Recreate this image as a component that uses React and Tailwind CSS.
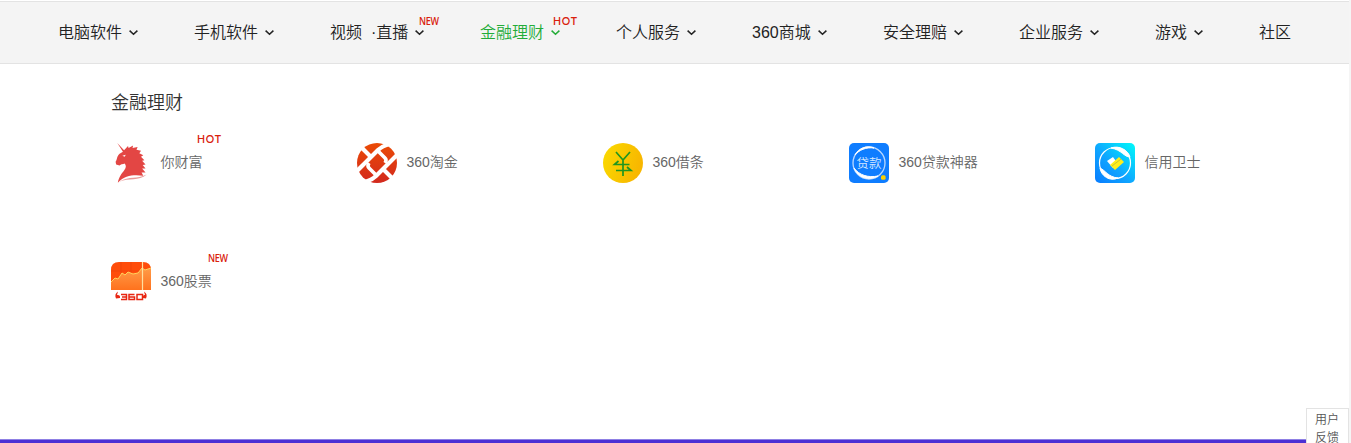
import React from 'react';

const NAV = [
  { label: '电脑软件', width: 'w-[136px]' },
  { label: '手机软件', width: 'w-[136px]' },
  { label: '视频', second: '·直播', badge: 'NEW', width: 'w-[150px]' },
  { label: '金融理财', badge: 'HOT', active: true, width: 'w-[136px]' },
  { label: '个人服务', width: 'w-[136px]' },
  { label: '360商城', width: 'w-[131px]' },
  { label: '安全理赔', width: 'w-[136px]' },
  { label: '企业服务', width: 'w-[136px]' },
  { label: '游戏', width: 'w-[104px]' },
  { label: '社区', leaf: true, width: 'w-[32px]' },
];

function Badge({ kind, className }) {
  return (
    <span
      className={`absolute text-[#d9210c] leading-[12px] ${
        kind === 'HOT'
          ? "font-['Lato','Liberation_Sans',sans-serif] font-semibold text-[10.5px] tracking-[0.8px]"
          : "origin-left scale-x-[.82] font-['Open_Sans','Liberation_Sans',sans-serif] font-semibold text-[11px] tracking-[-0.3px]"
      } ${className}`}
    >
      {kind}
    </span>
  );
}

function Chevron() {
  return (
    <svg className="ml-[7px] h-[6px] w-[9px] shrink-0" viewBox="0 0 9 6" fill="none" stroke="currentColor" strokeWidth="1.5">
      <path d="M.6 .6 4.5 4.2 8.4 .6" />
    </svg>
  );
}

function NavItem({ item }) {
  return (
    <a className={`relative flex shrink-0 items-center whitespace-nowrap ${item.width} ${item.active ? 'text-[#23ac38]' : 'text-[#222]'}`}>
      <span>{item.label}</span>
      {item.second && <span className="ml-[9px]">{item.second}</span>}
      {!item.leaf && <Chevron />}
      {item.badge === 'NEW' && <Badge kind="NEW" className="left-[89px] top-[-2px]" />}
      {item.badge === 'HOT' && <Badge kind="HOT" className="left-[73px] top-[-2px]" />}
    </a>
  );
}

function Unicorn() {
  return (
    <svg className="size-10 shrink-0" viewBox="0 0 40 40">
      <g transform="translate(-.5 0) scale(1.13 1.02)">
        <path fill="#e34644" d="M6 0 12 7 15.500 3 16 5 20 2.500 19.500 5 24 4 23 6.500 27 7.500 25.500 10 29 12 27 13.500 30 17 28 17.500 31 21 28.500 21.500 31 25 28 25 31 29 27.500 29 29 32C21 31 13 31 6.500 39 7.500 33 10 30 12 27 14 24 14 22 12.500 20 11 21 10 20 8 22L5 21 4.500 18.500C6 16 5.500 13 8 10.500L11 8.500Z" />
        <path d="M32 31C23 36 17 32 8 38 16 34 25 38 32 31" fill="#e99a99" />
        <path d="m10.500 12.500 3-1-1 2Z" fill="#fff" />
      </g>
    </svg>
  );
}

function Taojin() {
  return (
    <svg className="size-10 shrink-0" viewBox="0 0 40 40">
      <defs>
        <linearGradient id="taojin" x2="0" y2="1">
          <stop stopColor="#eb4b05" />
          <stop offset="1" stopColor="#d2291e" />
        </linearGradient>
      </defs>
      <circle cx="20" cy="20" r="20" fill="url(#taojin)" />
      <g fill="none" stroke="#fff" strokeWidth="4.200">
        <path d="M4 4 13 13M-1 29 21 7Q25 3 33 1" />
        <path d="M36 36 27 27M41 11 19 33Q15 37 7 39" />
        <path d="M21 8 28 15Q30 17 28 20M19 32 12 25Q10 23 12 20" strokeWidth="3.600" />
      </g>
    </svg>
  );
}

function Jietiao() {
  return (
    <svg className="size-10 shrink-0" viewBox="0 0 40 40">
      <defs>
        <linearGradient id="jietiao" y2=".3">
          <stop stopColor="#fadb00" />
          <stop offset="1" stopColor="#f8b700" />
        </linearGradient>
      </defs>
      <circle cx="20" cy="20" r="20" fill="url(#jietiao)" />
      <path d="m13 9 7 8 7-8M20 17v16M15.500 18l-4 3.500h15M13 27.500h15l-4-3.500" fill="none" stroke="#1f9620" strokeWidth="1.700" />
    </svg>
  );
}

function Daikuan() {
  return (
    <svg className="size-10 shrink-0" viewBox="0 0 40 40">
      <rect width="40" height="40" rx="5" fill="#0f7dff" />
      <circle cx="20" cy="20" r="16" fill="none" stroke="#b9d8ff" strokeWidth="1.300" />
      <path d="M6 12C10 5 18 2 25 5 17 4 10 7 6 12ZM5 25C9 35 20 38 29 33 19 35 10 32 5 25Z" fill="#fff" stroke="#fff" />
      <text x="20" y="24.500" textAnchor="middle" fontSize="12.500" fontFamily="'Noto Sans CJK SC', sans-serif" fill="#d5e8ff">贷款</text>
      <rect x="32" y="32.200" width="4.600" height="4.600" rx="1.500" fill="#ffd100" />
    </svg>
  );
}

function Weishi() {
  return (
    <svg className="size-10 shrink-0" viewBox="0 0 40 40">
      <defs>
        <linearGradient id="weishi" x1="1" x2="0" y2="1">
          <stop stopColor="#00fafa" />
          <stop offset=".55" stopColor="#0fa5ff" />
          <stop offset="1" stopColor="#087cff" />
        </linearGradient>
      </defs>
      <rect width="40" height="40" rx="5" fill="url(#weishi)" />
      <circle cx="20" cy="20" r="15.500" fill="none" stroke="#fff" strokeWidth="1.200" />
      <path d="M16 5C24 2 33 7 35 14 29 14 27 7 16 5ZM5 25C10 27 13 34 23 35 15 39 6 33 5 25Z" fill="#fff" stroke="#fff" />
      <path d="m12 18 6-4 5 7-5 4Z" fill="#fff" />
      <path d="m15 22 9-8 5 5-9 8Z" fill="#ffee1c" />
      <path d="m17 23 9-7" stroke="#b9b83d" strokeWidth=".8" />
    </svg>
  );
}

function Stocks() {
  return (
    <svg className="size-10 shrink-0" viewBox="0 0 40 40">
      <defs>
        <linearGradient id="stocks" x2="0" y2="1">
          <stop stopColor="#ff9b48" />
          <stop offset="1" stopColor="#ff721d" />
        </linearGradient>
      </defs>
      <path d="M0 28V8Q0 0 8 0H32Q40 0 40 8V28Z" fill="#ff4d0b" />
      <path d="M0 9H40M0 19H40M10 0V28M20 0V28" stroke="#e94208" strokeWidth=".7" />
      <path d="M0 20 4 16 7 17 11 11 14 13 17 10 22 12 27 11 31 6 34 8 40 6V28H0Z" fill="url(#stocks)" />
      <path d="M0 20 4 16 7 17 11 11 14 13 17 10 22 12 27 11 31 6 34 8 40 6" fill="none" stroke="#ffd25a" />
      <path d="M31.500 0V28" stroke="#ffe0a0" strokeWidth="1.200" />
      <path d="M10 32.500H15.500V37.500H10M11 35H15.500M23.500 32.500H18V37.500H23.500V35H18M26 32.500H31.500V37.500H26Z" fill="none" stroke="#e82713" strokeWidth="1.500" />
      <path d="M7 29.500Q3 32 5 36.500L9 36Q9.500 32.500 6 33M33 29.500Q37 32 35 36.500L32 36Q31.500 32.500 34 33" fill="#e82713" />
    </svg>
  );
}

const PRODUCTS = [
  { name: '你财富', Icon: Unicorn, badge: 'HOT' },
  { name: '360淘金', Icon: Taojin },
  { name: '360借条', Icon: Jietiao },
  { name: '360贷款神器', Icon: Daikuan },
  { name: '信用卫士', Icon: Weishi },
  { name: '360股票', Icon: Stocks, badge: 'NEW' },
];

export default function App() {
  return (
    <div className="flex h-[443px] w-[1351px] overflow-hidden bg-white font-['Liberation_Sans','Noto_Sans_CJK_SC',sans-serif] font-[350]">
      <div className="flex w-[1349px] flex-col">
        <nav className="mt-px flex h-[63px] shrink-0 items-center border-y border-[#e3e3e3] bg-[#f4f4f4] pl-[58px] text-[16px] leading-[32px]">
          {NAV.map((item) => <NavItem key={item.label} item={item} />)}
        </nav>
        <main className="flex-1 pl-[111px] pt-[25px]">
          <h2 className="text-[18px] leading-[28px] text-[#333]">金融理财</h2>
          <div className="mt-[26px] grid grid-cols-[repeat(5,246px)] auto-rows-[119px]">
            {PRODUCTS.map(({ name, Icon, badge }) => (
              <a key={name} className="relative flex h-10 items-center gap-[9.5px] text-[14px] leading-[20px] text-[#666]">
                <Icon />
                <span className="pb-[2px]">{name}</span>
                {badge === 'HOT' && <Badge kind="HOT" className="left-[86px] top-[-10px]" />}
                {badge === 'NEW' && <Badge kind="NEW" className="left-[97px] top-[-10px]" />}
              </a>
            ))}
          </div>
        </main>
        <div className="h-[4px] shrink-0 border-t border-[#8f80e4] bg-[#4c30d4]" />
      </div>
      <div className="w-[2px] bg-[#f5f5f5]" />
      <aside className="absolute left-[1306px] top-[408px] h-[35px] w-[43px] overflow-hidden border border-b-0 border-[#e3e3e3] bg-white pl-[8px] pt-[2px] text-[12px] leading-[18px] text-[#555]">
        <p>用户</p>
        <p>反馈</p>
      </aside>
    </div>
  );
}
